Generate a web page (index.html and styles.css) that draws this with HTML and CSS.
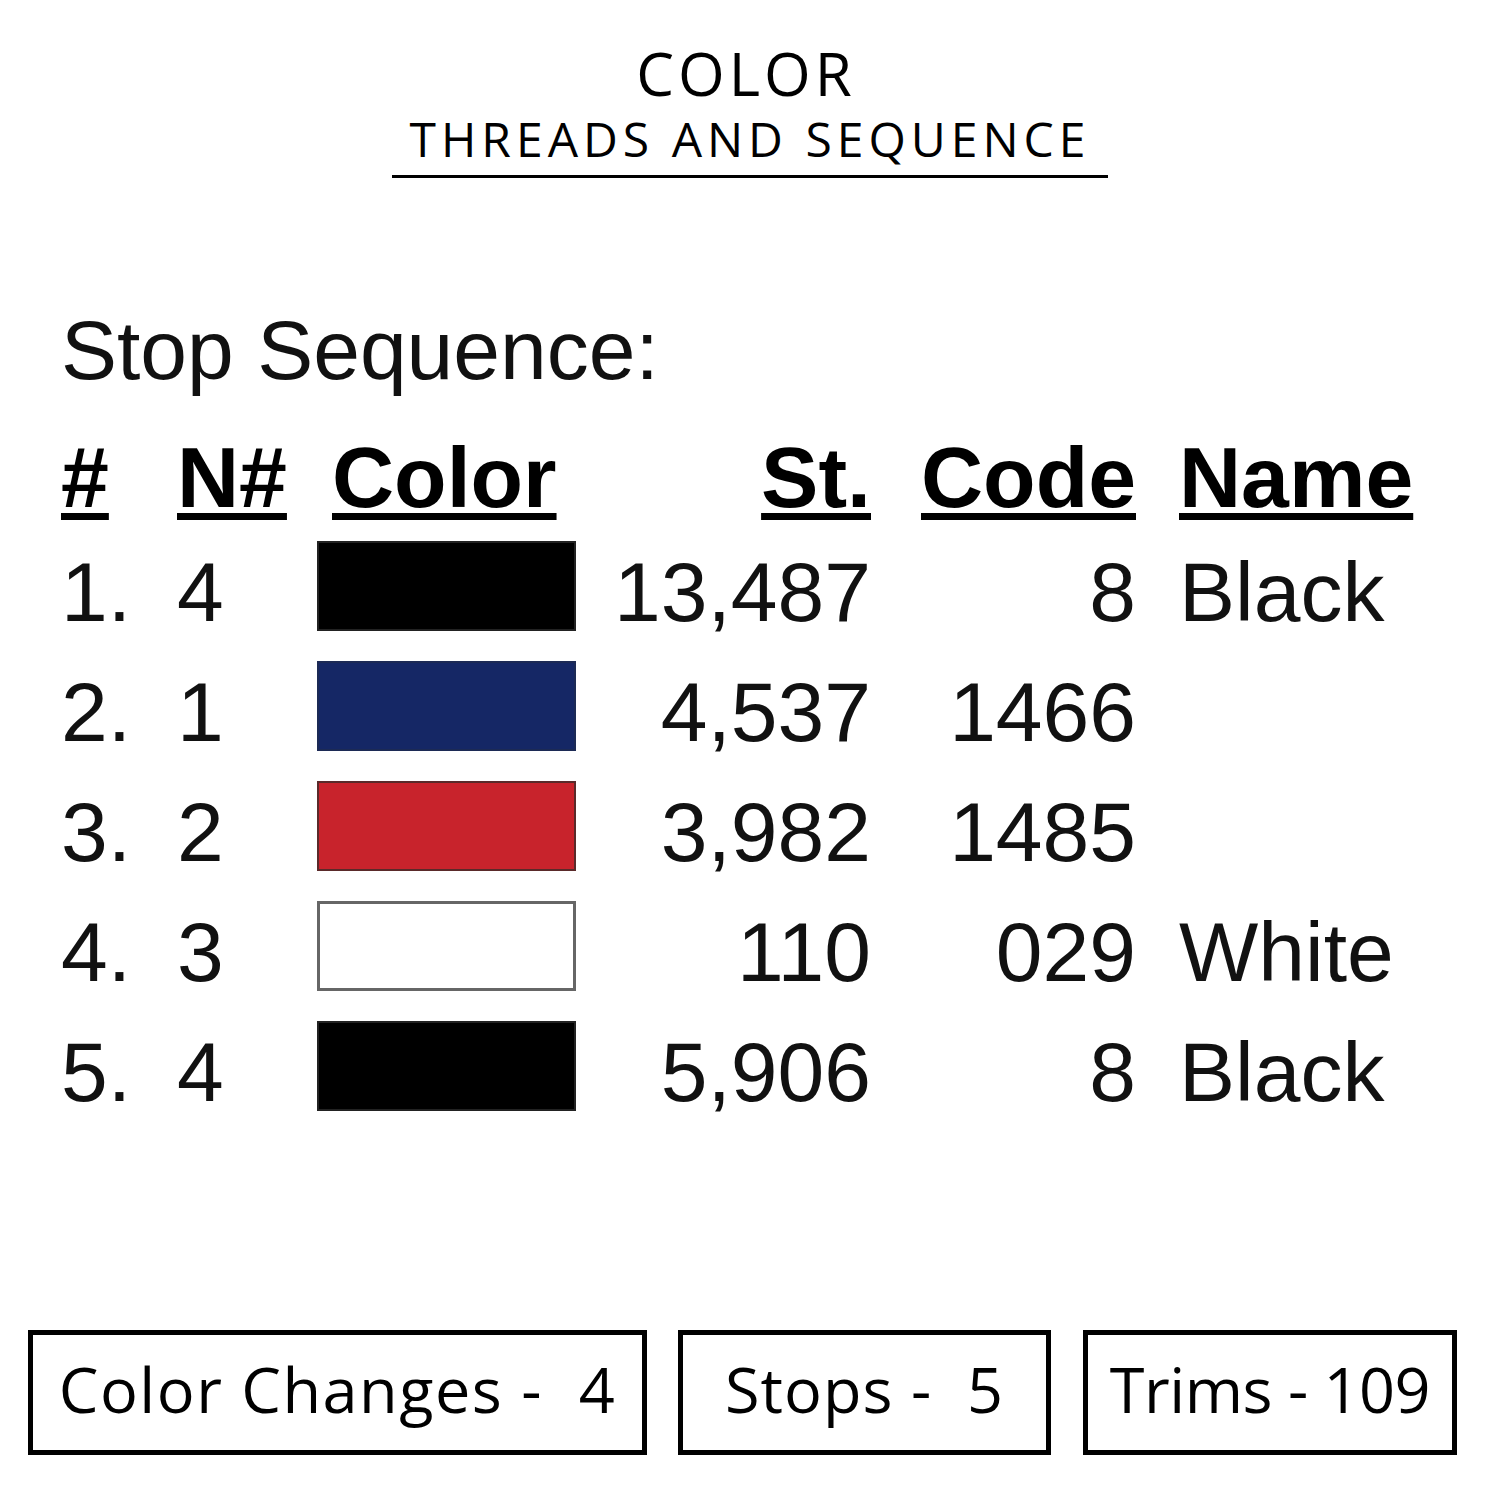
FILE: index.html
```html
<!DOCTYPE html>
<html lang="en">
<head>
<meta charset="utf-8">
<title>Color - Threads and Sequence</title>
<link rel="stylesheet" href="styles.css">
</head>
<body>
<div class="page">
  <header class="head">
    <div class="title">COLOR</div>
    <div class="subtitle">THREADS AND SEQUENCE</div>
  </header>

  <section class="seq">
    <div class="seq-title">Stop Sequence:</div>
    <div class="row row-head">
      <div class="c1"><span class="u">#</span></div>
      <div class="c2"><span class="u">N#</span></div>
      <div class="c3 hc"><span class="u">Color</span></div>
      <div class="c4"><span class="u">St.</span></div>
      <div class="c5"><span class="u">Code</span></div>
      <div class="c6"><span class="u">Name</span></div>
    </div>
    <div class="row">
      <div class="c1">1.</div>
      <div class="c2">4</div>
      <div class="c3"><div class="sw sw-black"></div></div>
      <div class="c4">13,487</div>
      <div class="c5">8</div>
      <div class="c6">Black</div>
    </div>
    <div class="row">
      <div class="c1">2.</div>
      <div class="c2">1</div>
      <div class="c3"><div class="sw sw-blue"></div></div>
      <div class="c4">4,537</div>
      <div class="c5">1466</div>
      <div class="c6"></div>
    </div>
    <div class="row">
      <div class="c1">3.</div>
      <div class="c2">2</div>
      <div class="c3"><div class="sw sw-red"></div></div>
      <div class="c4">3,982</div>
      <div class="c5">1485</div>
      <div class="c6"></div>
    </div>
    <div class="row">
      <div class="c1">4.</div>
      <div class="c2">3</div>
      <div class="c3"><div class="sw sw-white"></div></div>
      <div class="c4">110</div>
      <div class="c5">029</div>
      <div class="c6">White</div>
    </div>
    <div class="row">
      <div class="c1">5.</div>
      <div class="c2">4</div>
      <div class="c3"><div class="sw sw-black"></div></div>
      <div class="c4">5,906</div>
      <div class="c5">8</div>
      <div class="c6">Black</div>
    </div>
  </section>

  <footer class="stats">
    <div class="stat stat-wide">Color Changes -&nbsp; 4</div>
    <div class="stat">Stops -&nbsp; 5</div>
    <div class="stat stat-trims">Trims - 109</div>
  </footer>
</div>
</body>
</html>
```

FILE: styles.css
```css
html, body {
  margin: 0;
  padding: 0;
  background: #ffffff;
}

.page {
  width: 1500px;
  height: 1500px;
  color: #000;
  font-family: "Open Sans", "Noto Sans", sans-serif;
}

.head {
  padding-top: 43px;
  display: flex;
  flex-direction: column;
  align-items: center;
}

.title {
  font-size: 60px;
  line-height: 60px;
  letter-spacing: 4px;
  margin-left: -8px;
  font-weight: 500;
}

.subtitle {
  margin-top: 12px;
  width: 716px;
  box-sizing: border-box;
  text-align: center;
  font-size: 48px;
  line-height: 48px;
  letter-spacing: 5px;
  padding-bottom: 12px;
  border-bottom: 3px solid #000;
}

.seq {
  margin-top: 124px;
  padding-left: 61px;
  font-family: "Liberation Sans", Arial, sans-serif;
  color: #111;
}

.seq-title {
  font-size: 84px;
  line-height: 96px;
  margin-bottom: 31px;
}

.row {
  display: grid;
  grid-template-columns: 116px 140px 259px 295px 265px 1fr;
  font-size: 84px;
  line-height: 120px;
  white-space: nowrap;
}

.row-head {
  font-weight: 700;
  font-size: 86px;
  line-height: 96px;
  margin-bottom: 7px;
  color: #000;
}

.u {
  text-decoration: underline;
  text-decoration-thickness: 7px;
  text-underline-offset: 6px;
}

.hc {
  padding-left: 15px;
}

.c4, .c5 {
  text-align: right;
}

.c6 {
  padding-left: 43px;
}

.sw {
  margin-top: 9px;
  width: 259px;
  height: 90px;
  box-sizing: border-box;
  border: 2px solid #333;
}

.sw-black { background: #000; border-color: #222; }
.sw-blue { background: #152765; border-color: #1c2a55; }
.sw-red { background: #c8232c; border-color: #5a2a2a; }
.sw-white { background: #fff; border: 3px solid #666; }

.stats {
  margin-top: 198px;
  padding-left: 28px;
  display: flex;
  gap: 31px;
}

.stat {
  width: 373px;
  height: 125px;
  box-sizing: border-box;
  border: 5px solid #000;
  font-size: 63px;
  font-weight: 500;
  line-height: 107px;
  padding-bottom: 8px;
  text-align: center;
  white-space: nowrap;
  letter-spacing: 1px;
}

.stat-wide {
  width: 619px;
  letter-spacing: 1.5px;
}

.stat-trims {
  width: 374px;
  margin-left: 1px;
  letter-spacing: -0.5px;
}
```
